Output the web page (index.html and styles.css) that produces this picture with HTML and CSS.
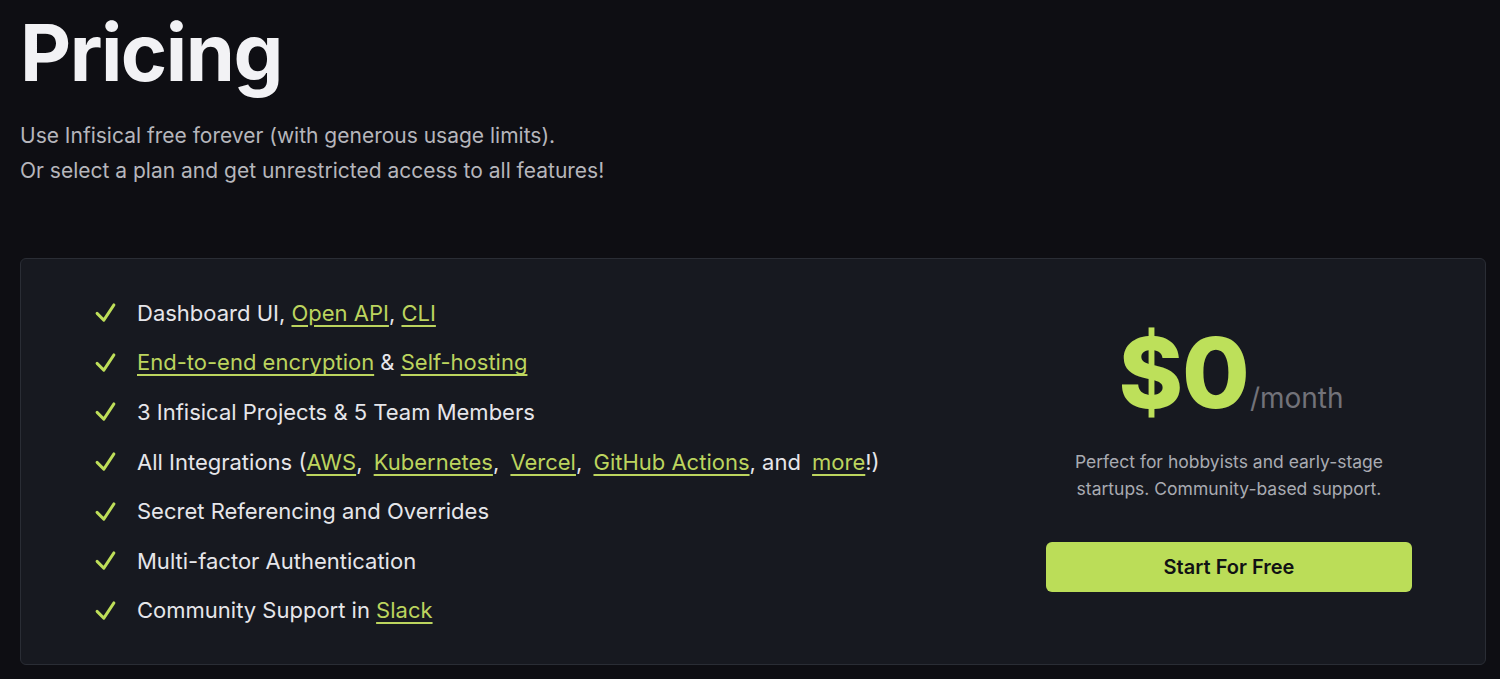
FILE: index.html
```html
<!DOCTYPE html>
<html lang="en">
<head>
<meta charset="utf-8">
<title>Pricing</title>
<link rel="stylesheet" href="styles.css">
</head>
<body>
<main class="page">
  <header class="intro">
    <h1 class="title">Pricing</h1>
    <p class="lead">Use Infisical free forever (with generous usage limits).<br>Or select a plan and get unrestricted access to all features!</p>
  </header>
  <section class="card">
    <ul class="features">
      <li class="feature"><svg class="check" viewBox="0 0 24 24"><path d="M4.5 12.75l6 6 9-13.5"/></svg><span>Dashboard UI, <a href="#">Open API</a>, <a href="#">CLI</a></span></li>
      <li class="feature"><svg class="check" viewBox="0 0 24 24"><path d="M4.5 12.75l6 6 9-13.5"/></svg><span><a href="#">End-to-end encryption</a> &amp; <a href="#">Self-hosting</a></span></li>
      <li class="feature"><svg class="check" viewBox="0 0 24 24"><path d="M4.5 12.75l6 6 9-13.5"/></svg><span>3 Infisical Projects &amp; 5 Team Members</span></li>
      <li class="feature"><svg class="check" viewBox="0 0 24 24"><path d="M4.5 12.75l6 6 9-13.5"/></svg><span>All Integrations (<a href="#">AWS</a>, <a class="gap" href="#">Kubernetes</a>, <a class="gap" href="#">Vercel</a>, <a class="gap" href="#">GitHub Actions</a>, and <a class="gap" href="#">more</a>!)</span></li>
      <li class="feature"><svg class="check" viewBox="0 0 24 24"><path d="M4.5 12.75l6 6 9-13.5"/></svg><span>Secret Referencing and Overrides</span></li>
      <li class="feature"><svg class="check" viewBox="0 0 24 24"><path d="M4.5 12.75l6 6 9-13.5"/></svg><span>Multi-factor Authentication</span></li>
      <li class="feature"><svg class="check" viewBox="0 0 24 24"><path d="M4.5 12.75l6 6 9-13.5"/></svg><span>Community Support in <a href="#">Slack</a></span></li>
    </ul>
    <div class="plan">
      <div class="price"><span class="amount">$0</span><span class="period">/month</span></div>
      <p class="desc">Perfect for hobbyists and early-stage<br>startups. Community-based support.</p>
      <button class="cta" type="button">Start For Free</button>
    </div>
  </section>
</main>
</body>
</html>
```
FILE: styles.css
```css
* { box-sizing: border-box; }
html, body { margin: 0; height: 100%; }
body {
  background: #0e0e13;
  color: #ececf0;
  font-family: Inter, "Noto Sans", sans-serif;
  overflow: hidden;
}
.page {
  padding: 0 14px 0 20px;
}
.intro {
  padding-top: 4px;
}
.title {
  margin: 0;
  font-size: 79px;
  font-weight: 700;
  line-height: 96px;
  letter-spacing: -1.5px;
  color: #f2f2f5;
}
.lead {
  margin: 18px 0 0;
  font-size: 21px;
  line-height: 35px;
  color: #b6b6bc;
  font-weight: 400;
}
.card {
  margin-top: 70px;
  height: 407px;
  background: #171920;
  border: 1px solid #2a2d35;
  border-radius: 6px;
  display: flex;
  align-items: center;
  justify-content: space-between;
  padding: 0 73px 0 74px;
}
.features {
  list-style: none;
  margin: 0;
  padding: 0;
  display: flex;
  flex-direction: column;
}
.feature {
  display: flex;
  align-items: center;
  height: 49.6px;
  font-size: 22px;
  color: #e6e6ea;
}
.check {
  width: 27px;
  height: 27px;
  margin-right: 18px;
  margin-left: -3px;
  fill: none;
  stroke: #bede59;
  stroke-width: 2.6;
  stroke-linecap: round;
  stroke-linejoin: round;
}
.feature a {
  color: #bcd45e;
  text-decoration: underline;
  text-decoration-thickness: 2px;
  text-underline-offset: 4px;
}
.feature a.gap { margin-left: 5px; }
.plan {
  width: 366px;
  display: flex;
  flex-direction: column;
  align-items: center;
  padding-bottom: 8px;
}
.price {
  display: flex;
  align-items: baseline;
  margin-left: 4px;
}
.amount {
  font-size: 98px;
  font-weight: 800;
  line-height: 1;
  color: #bde05a;
  letter-spacing: -1px;
}
.period {
  font-size: 28px;
  color: #727279;
  margin-left: 1px;
}
.desc {
  margin: 26px 0 0;
  text-align: center;
  font-size: 17.5px;
  line-height: 27px;
  color: #a9abb2;
}
.cta {
  margin-top: 40px;
  width: 366px;
  height: 50px;
  border: 0;
  border-radius: 6px;
  background: #bbdd58;
  color: #111214;
  font-family: inherit;
  font-size: 20px;
  font-weight: 600;
}
```
